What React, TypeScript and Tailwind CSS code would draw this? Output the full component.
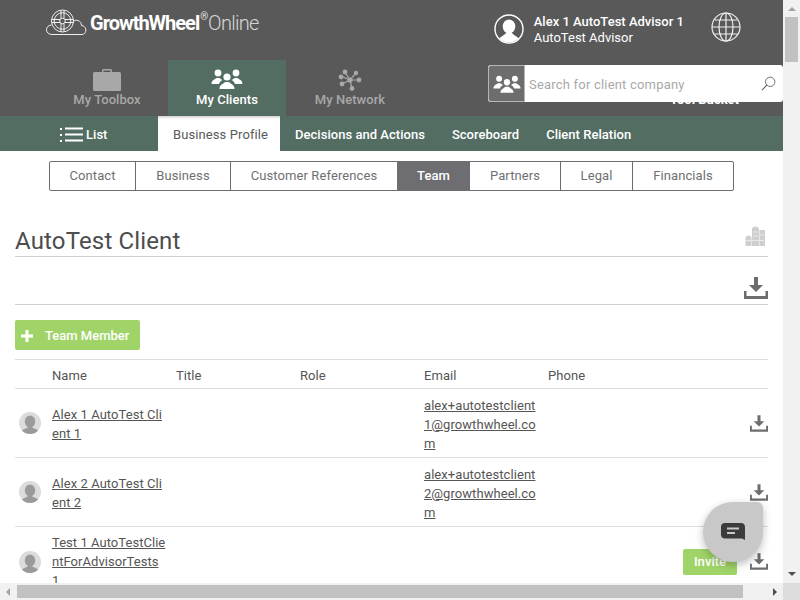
import React from "react";

const Users = ({ className = "" }: { className?: string }) => (
  <svg viewBox="0 0 32 20" className={className} fill="currentColor">
    <circle cx="7" cy="4" r="3.4" />
    <circle cx="25" cy="4" r="3.4" />
    <path d="M0.5 15 C0.5 11 4 10.5 5.5 9 H8.5 C9.5 10 10.5 10.5 11.5 11 C9.5 12 8.5 13 8 15 Z" />
    <path d="M31.5 15 C31.5 11 28 10.5 26.5 9 H23.5 C22.5 10 21.5 10.5 20.5 11 C22.5 12 23.5 13 24 15 Z" />
    <circle cx="16" cy="8" r="3.6" />
    <path d="M8.5 20 C8.5 15.5 12.5 15 14 13 H18 C19.5 15 23.5 15.5 23.5 20 Z" />
  </svg>
);

const Download = ({ className = "" }: { className?: string }) => (
  <svg viewBox="0 0 24 22" className={className} fill="#6d6d6d">
    <path d="M10 0 H14 V8 H19 L12 15 L5 8 H10 Z" />
    <path d="M0 14 H2.5 V19 H21.5 V14 H24 V22 H0 Z" />
  </svg>
);

const Avatar = () => (
  <svg viewBox="0 0 22 22" className="w-[22px] h-[22px] shrink-0">
    <defs>
      <clipPath id="avclip">
        <circle cx="11" cy="11" r="11" />
      </clipPath>
    </defs>
    <circle cx="11" cy="11" r="11" fill="#dcdcdc" />
    <g clipPath="url(#avclip)" fill="#9a9a9a">
      <ellipse cx="11" cy="9.5" rx="5.2" ry="6" />
      <path d="M1 22 C2 17 7 17 9 15 H13 C15 17 20 17 21 22 Z" />
    </g>
  </svg>
);

const tabs: [string, string][] = [
  ["Contact", "w-[86px]"],
  ["Business", "w-[95px]"],
  ["Customer References", "w-[166px]"],
  ["Team", "w-[73px]"],
  ["Partners", "w-[91px]"],
  ["Legal", "w-[72px]"],
  ["Financials", "w-[100px]"],
];

const rows = [
  {
    name: "Alex 1 AutoTest Client 1",
    email: "alex+autotestclient1@growthwheel.com",
  },
  {
    name: "Alex 2 AutoTest Client 2",
    email: "alex+autotestclient2@growthwheel.com",
  },
];

export default function App() {
  return (
    <div
      className="relative w-[800px] h-[600px] overflow-hidden bg-white flex"
      style={{ fontFamily: "Roboto, sans-serif" }}
    >
      <div className="w-[783px] h-[583px] overflow-hidden flex flex-col relative">
        {/* Header */}
        <header className="relative h-[116px] shrink-0 bg-[#595959] text-white">
          <div className="h-[60px] flex items-start pl-[45px]">
            <svg
              viewBox="0 0 42 26"
              className="w-[42px] h-[26px] mt-[9px] shrink-0"
              fill="none"
              stroke="#fff"
              strokeWidth="0.9"
            >
              <path d="M7 25.5 H37 C42 25.5 42.5 17 36.5 16.5 C36.5 11.5 31 9.5 27.5 13 M7 25.5 C0 25.5 -0.5 16.5 6.5 16" />
              <circle cx="17.5" cy="12" r="11" fill="#595959" />
              <circle cx="17.5" cy="12" r="8.3" />
              <circle cx="17.5" cy="12" r="2.8" />
              <path d="M16 1 V9.4 M19 1 V9.4 M16 14.6 V23 M19 14.6 V23 M6.5 10.5 H15 M6.5 13.5 H15 M20 10.5 H28.5 M20 13.5 H28.5" />
            </svg>
            <div className="ml-[3px] mt-[10px] flex items-start text-[20px] leading-[26px]">
              <span className="font-bold tracking-[-1px]">GrowthWheel</span>
              <span className="text-[10px] leading-[12px] mt-[1px] ml-[1px] text-[#e5e5e5]">®</span>
              <span className="font-light text-[#d6d6d6] tracking-[-0.7px]">Online</span>
            </div>
            <svg
              viewBox="0 0 30 30"
              className="w-[30px] h-[30px] ml-[235px] mt-[14px] shrink-0"
            >
              <defs>
                <clipPath id="userclip">
                  <circle cx="15" cy="15" r="13.5" />
                </clipPath>
              </defs>
              <circle cx="15" cy="15" r="14" fill="none" stroke="#fff" strokeWidth="1.4" />
              <g clipPath="url(#userclip)" fill="#fff">
                <ellipse cx="15" cy="12.5" rx="6.3" ry="7" />
                <path d="M2 30 C3 23 9 23 12 19 H18 C21 23 27 23 28 30 Z" />
              </g>
            </svg>
            <div className="ml-[10px] mt-[14px] text-[13px] leading-[16px]">
              <div className="font-medium">Alex 1 AutoTest Advisor 1</div>
              <div>AutoTest Advisor</div>
            </div>
            <svg
              viewBox="0 0 30 30"
              className="w-[30px] h-[30px] ml-[27px] mt-[12px] shrink-0"
              fill="none"
              stroke="#f0f0f0"
              strokeWidth="1.2"
            >
              <circle cx="15" cy="15" r="14" />
              <ellipse cx="15" cy="15" rx="7" ry="14" />
              <path d="M15 1 V29 M1 15 H29 M3.5 8 H26.5 M3.5 22 H26.5" />
            </svg>
          </div>

          <nav className="h-[56px] flex pl-[46px] text-[13px] font-medium">
            <div className="w-[122px] flex flex-col items-center pt-[9px] text-[#a8a8a8]">
              <svg viewBox="0 0 28 22" className="w-[28px] h-[22px]" fill="#a8a8a8">
                <path d="M9 3 V1.5 C9 0.7 9.7 0 10.5 0 H17.5 C18.3 0 19 0.7 19 1.5 V3 H17.6 V1.5 H10.4 V3 Z" />
                <rect x="0" y="3" width="28" height="19" rx="1.5" />
              </svg>
              <span className="leading-[16px] mt-[1px] tracking-[0.05px]">My Toolbox</span>
            </div>
            <div className="w-[118px] flex flex-col items-center pt-[9px] bg-[#536d62] text-white">
              <Users className="w-[32px] h-[20px] mb-[2px]" />
              <span className="leading-[16px] mt-[1px] tracking-[0.05px]">My Clients</span>
            </div>
            <div className="w-[128px] flex flex-col items-center pt-[9px] text-[#a8a8a8]">
              <svg viewBox="0 0 24 22" className="w-[24px] h-[22px] mb-[1px]" fill="#a8a8a8" stroke="#a8a8a8">
                <path d="M12 11 L7 3 M12 11 L3 7 M12 11 L4 15 M12 11 L14 20 M12 11 L21 11 M12 11 L18 4" strokeWidth="1.2" />
                <circle cx="7" cy="3" r="2.4" stroke="none" />
                <circle cx="3" cy="8" r="2.4" stroke="none" />
                <circle cx="4" cy="15" r="2.4" stroke="none" />
                <circle cx="14" cy="19.5" r="2.4" stroke="none" />
                <circle cx="21" cy="11" r="2.4" stroke="none" />
                <circle cx="18" cy="4" r="2.2" stroke="none" />
                <circle cx="12" cy="11" r="2.6" stroke="none" />
              </svg>
              <span className="leading-[16px] tracking-[0.05px]">My Network</span>
            </div>
          </nav>

          <span className="absolute left-[670px] top-[93px] text-[13px] font-bold leading-[14px] text-white">
            Tool Bucket
          </span>
          <div className="absolute left-[488px] top-[65px] w-[295px] h-[37px] flex rounded-[3px] overflow-hidden bg-white">
            <div className="w-[37px] h-full bg-[#6d6d6d] border border-[#b5b5b5] rounded-l-[3px] flex items-center justify-center text-white">
              <Users className="w-[28px] h-[18px]" />
            </div>
            <div className="flex-1 flex items-center pl-[4px] pt-[2px] text-[13px] text-[#a9a9a9] tracking-[0.2px]">
              Search for client company
            </div>
            <svg
              viewBox="0 0 16 16"
              className="w-[15px] h-[15px] self-center mr-[7px]"
              fill="none"
              stroke="#666"
              strokeWidth="1"
            >
              <circle cx="9.8" cy="6.2" r="5" />
              <path d="M6.2 9.8 L1 15" strokeWidth="1.3" />
            </svg>
          </div>
        </header>

        {/* Sub nav */}
        <div className="h-[35px] shrink-0 bg-[#536d62] flex text-[13px] font-medium text-white tracking-[0.03px]">
          <div className="w-[158px] flex items-center pl-[60px] pt-[2px]">
            <svg viewBox="0 0 23 16" className="w-[23px] h-[16px] mr-[3px]" fill="#fff">
              <rect x="0" y="1" width="2" height="2" />
              <rect x="0" y="7" width="2" height="2" />
              <rect x="0" y="13" width="2" height="2" />
              <rect x="5" y="0.5" width="18" height="2" />
              <rect x="5" y="6.5" width="18" height="2" />
              <rect x="5" y="12.5" width="18" height="2" />
            </svg>
            <span>List</span>
          </div>
          <div className="w-[122px] pt-[2px] pl-[3px] bg-white text-[#5a5a5a] font-normal tracking-[0.1px] flex items-center justify-center shadow-[inset_0_3px_3px_-2px_rgba(0,0,0,0.25)]">
            Business Profile
          </div>
          <div className="flex items-center pl-[15px] pt-[2px] gap-[27px]">
            <span>Decisions and Actions</span>
            <span>Scoreboard</span>
            <span>Client Relation</span>
          </div>
        </div>

        {/* Section tabs */}
        <div className="mt-[10px] ml-[49px] flex w-[685px] h-[30px] shrink-0 border border-[#6d6d70] rounded-[2px] text-[13px] tracking-[0.1px] text-[#6f6f72]">
          {tabs.map(([t, w], i) => (
            <div
              key={t}
              className={`${w} flex items-center justify-center ${
                t === "Team"
                  ? "bg-[#6d6d72] text-white font-medium"
                  : i < tabs.length - 1 && t !== "Customer References"
                  ? "border-r border-[#6d6d70]"
                  : ""
              }`}
            >
              {t}
            </div>
          ))}
        </div>

        {/* Content */}
        <main className="pl-[15px] w-[768px] flex-1 min-h-0">
          <div className="h-[66px] flex items-end justify-between border-b border-[#cfcfcf]">
            <h1 className="text-[24px] leading-[30px] text-[#4d4d4d] tracking-[0.15px]">
              AutoTest Client
            </h1>
            <svg viewBox="0 0 20 20" className="w-[20px] h-[20px] mr-[3px] mb-[10px]" fill="#cfcfcf">
              <path d="M7 20 V3 C7 -0.5 14 -0.5 14 3 V20 Z" />
              <rect x="14.5" y="4" width="5.5" height="16" />
              <path d="M0.5 20 V12 C0.5 8.5 6.5 8.5 6.5 12 V20 Z" />
              <path d="M1 14.5 H19 M8 6 H13 M8 10 H13 M15 9 H19" stroke="#efefef" strokeWidth="0.8" />
            </svg>
          </div>
          <div className="h-[48px] flex items-end justify-end border-b border-[#cfcfcf] pb-[5px]">
            <Download className="w-[24px] h-[22px]" />
          </div>
          <div className="mt-[15px] w-[125px] h-[30px] pt-[1px] rounded-[2px] bg-[#a0d468] text-white flex items-center text-[13px] font-medium">
            <svg viewBox="0 0 12 12" className="w-[12px] h-[12px] ml-[6px]" fill="#fff">
              <rect x="4.5" y="0" width="3" height="12" />
              <rect x="0" y="4.5" width="12" height="3" />
            </svg>
            <span className="ml-[12px]">Team Member</span>
          </div>

          <div className="mt-[9px] h-[30px] pt-[4px] border-y border-[#dedede] grid grid-cols-[37px_124px_124px_124px_124px_1fr] items-center text-[13px] tracking-[0.06px] text-[#555]">
            <span />
            <span>Name</span>
            <span>Title</span>
            <span>Role</span>
            <span>Email</span>
            <span>Phone</span>
          </div>

          {rows.map((r) => (
            <div
              key={r.name}
              className="h-[69px] border-b border-[#dedede] grid grid-cols-[37px_124px_124px_124px_124px_1fr] items-center text-[13px] leading-[19px] tracking-[0.06px] text-[#555]"
            >
              <div className="pl-[4px] flex items-center">
                <Avatar />
              </div>
              <a className="underline w-[112px] break-all mt-[2px]">{r.name}</a>
              <span />
              <span />
              <a className="underline w-[113px] break-all mt-[2px]">{r.email}</a>
              <div className="flex justify-end">
                <Download className="w-[18px] h-[17px]" />
              </div>
            </div>
          ))}

          <div className="h-[69px] grid grid-cols-[37px_124px_124px_124px_124px_1fr] items-center text-[13px] leading-[19px] tracking-[0.04px] text-[#555]">
            <div className="pl-[4px] flex items-center">
              <Avatar />
            </div>
            <div className="w-[116px] break-all">
              <a className="underline">Test 1 AutoTestClientForAdvisorTests</a> 1
            </div>
            <span />
            <span />
            <span />
            <div className="flex justify-end items-center">
              <div className="w-[54px] h-[26px] mr-[13px] rounded-[2px] bg-[#a0d468] text-white font-medium flex items-center justify-center">
                Invite
              </div>
              <Download className="w-[18px] h-[17px]" />
            </div>
          </div>
        </main>
      </div>

      {/* Vertical scrollbar */}
      <div className="absolute right-0 top-0 w-[17px] h-[583px] bg-[#f1f1f1] flex flex-col items-center">
        <svg viewBox="0 0 8 4" className="w-[8px] h-[4px] mt-[7px]" fill="#a3a3a3">
          <path d="M0 4 L4 0 L8 4 Z" />
        </svg>
        <div className="w-[13px] h-[45px] mt-[6px] bg-[#c1c1c1]" />
        <svg viewBox="0 0 8 4" className="w-[8px] h-[4px] mt-auto mb-[7px]" fill="#505050">
          <path d="M0 0 L4 4 L8 0 Z" />
        </svg>
      </div>
      {/* Horizontal scrollbar */}
      <div className="absolute left-0 bottom-0 w-[800px] h-[17px] bg-[#f1f1f1] flex items-center">
        <svg viewBox="0 0 4 8" className="w-[4px] h-[8px] ml-[6px]" fill="#a3a3a3">
          <path d="M4 0 L0 4 L4 8 Z" />
        </svg>
        <div className="w-[726px] h-[13px] ml-[7px] bg-[#c1c1c1]" />
        <svg viewBox="0 0 4 8" className="w-[4px] h-[8px] ml-[30px]" fill="#505050">
          <path d="M0 0 L4 4 L0 8 Z" />
        </svg>
        <div className="ml-auto w-[17px] h-[17px] bg-[#dcdcdc]" />
      </div>

      {/* Chat bubble */}
      <div className="absolute left-[703px] top-[502px] w-[60px] h-[60px] bg-[#c8c8c8] rounded-[30px] rounded-tr-[6px] shadow-[0_3px_8px_rgba(0,0,0,0.25)] flex items-center justify-center">
        <svg viewBox="0 0 24 18" className="w-[24px] h-[18px]">
          <path d="M4 0 H20 C22.5 0 24 1.5 24 4 V17 L21 15.5 H4 C1.5 15.5 0 14 0 11.5 V4 C0 1.5 1.5 0 4 0 Z" fill="#3b3b3b" />
          <path d="M6 5.5 H18 M6 10 H14" stroke="#c8c8c8" strokeWidth="2" />
        </svg>
      </div>
    </div>
  );
}
